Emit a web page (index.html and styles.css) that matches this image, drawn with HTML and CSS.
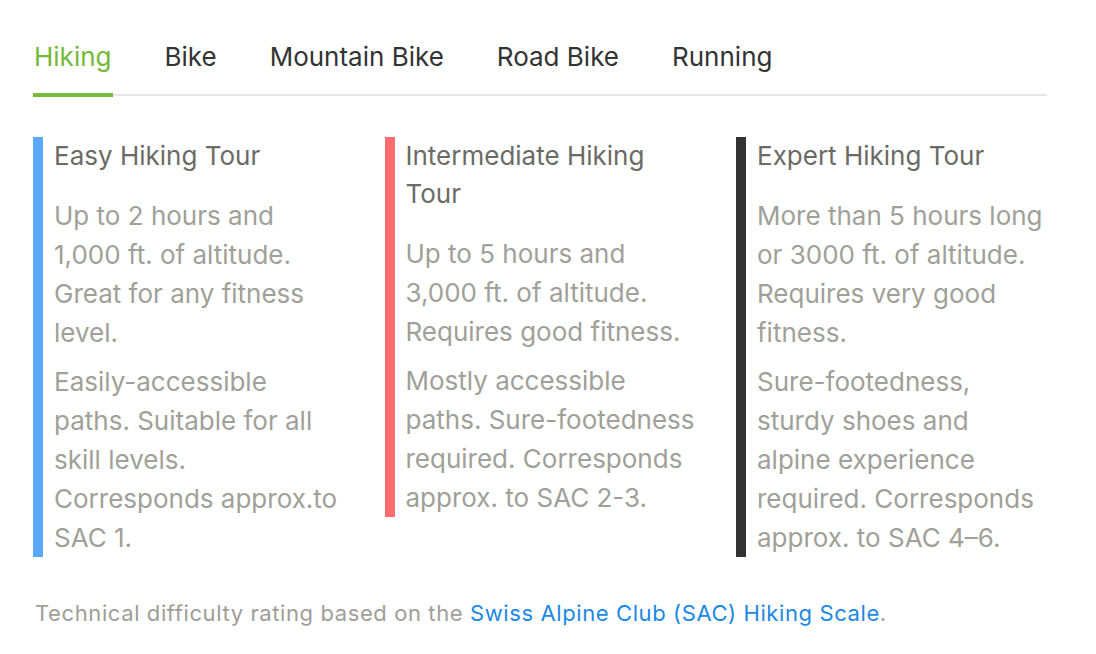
FILE: index.html
```html
<!DOCTYPE html>
<html lang="en">
<head>
<meta charset="utf-8">
<title>Hiking difficulty</title>
<link rel="stylesheet" href="styles.css">
</head>
<body>
<div class="page">
  <nav class="tabs">
    <a class="tab active">Hiking</a>
    <a class="tab">Bike</a>
    <a class="tab">Mountain Bike</a>
    <a class="tab">Road Bike</a>
    <a class="tab">Running</a>
  </nav>
  <div class="levels">
    <section class="level easy">
      <h3>Easy Hiking Tour</h3>
      <p>Up to 2 hours and 1,000 ft. of altitude. Great for any fitness level.</p>
      <p>Easily-accessible paths. Suitable for all skill levels. Corresponds approx.to SAC 1.</p>
    </section>
    <section class="level medium">
      <h3>Intermediate Hiking Tour</h3>
      <p>Up to 5 hours and 3,000 ft. of altitude. Requires good fitness.</p>
      <p>Mostly accessible paths. Sure-footedness required. Corresponds approx. to SAC 2-3.</p>
    </section>
    <section class="level expert">
      <h3>Expert Hiking Tour</h3>
      <p>More than 5 hours long or 3000 ft. of altitude. Requires very good fitness.</p>
      <p>Sure-footedness, sturdy shoes and alpine experience required. Corresponds approx. to SAC 4–6.</p>
    </section>
  </div>
  <p class="note">Technical difficulty rating based on the <a class="link">Swiss Alpine Club (SAC) Hiking Scale</a>.</p>
</div>
</body>
</html>
```
FILE: styles.css
```css
html, body {
  margin: 0;
  padding: 0;
  background: #ffffff;
}
body {
  font-family: Inter, "Open Sans", "Liberation Sans", sans-serif;
}
.page {
  width: 1014.5px;
  padding: 36px 0 0 33px;
}
.tabs {
  display: flex;
  align-items: flex-start;
  gap: 51px;
  width: 1014px;
  height: 58px;
  border-bottom: 2px solid #e6e6e6;
}
.tab {
  flex: none;
  font-size: 26px;
  line-height: 42px;
  color: #333333;
  padding: 0 1px 15px 1px;
  border-bottom: 4px solid transparent;
}
.tab.active {
  color: #74b83a;
  border-bottom-color: #77b93b;
}
.levels {
  display: grid;
  grid-template-columns: repeat(3, 1fr);
  column-gap: 40px;
  margin-top: 41px;
  align-items: start;
}
.level {
  border-left: 10px solid #5aa9fe;
  padding-left: 11px;
}
.level.medium { border-left-color: #ff6d6e; }
.level.expert { border-left-color: #333333; }
.level h3 {
  margin: 0 0 20px 0;
  font-size: 26px;
  font-weight: 400;
  line-height: 38px;
  padding-bottom: 1px;
  color: #6b6b66;
}
.level p {
  margin: 0 0 10px 0;
  font-size: 26px;
  line-height: 39px;
  color: #a09f99;
}
.level p:last-child { margin-bottom: 0; }
.note {
  margin: 41px 0 0 2px;
  font-size: 22px;
  line-height: 30px;
  letter-spacing: 0.6px;
  color: #9e9d98;
}
.link {
  color: #1b88e4;
}
```
